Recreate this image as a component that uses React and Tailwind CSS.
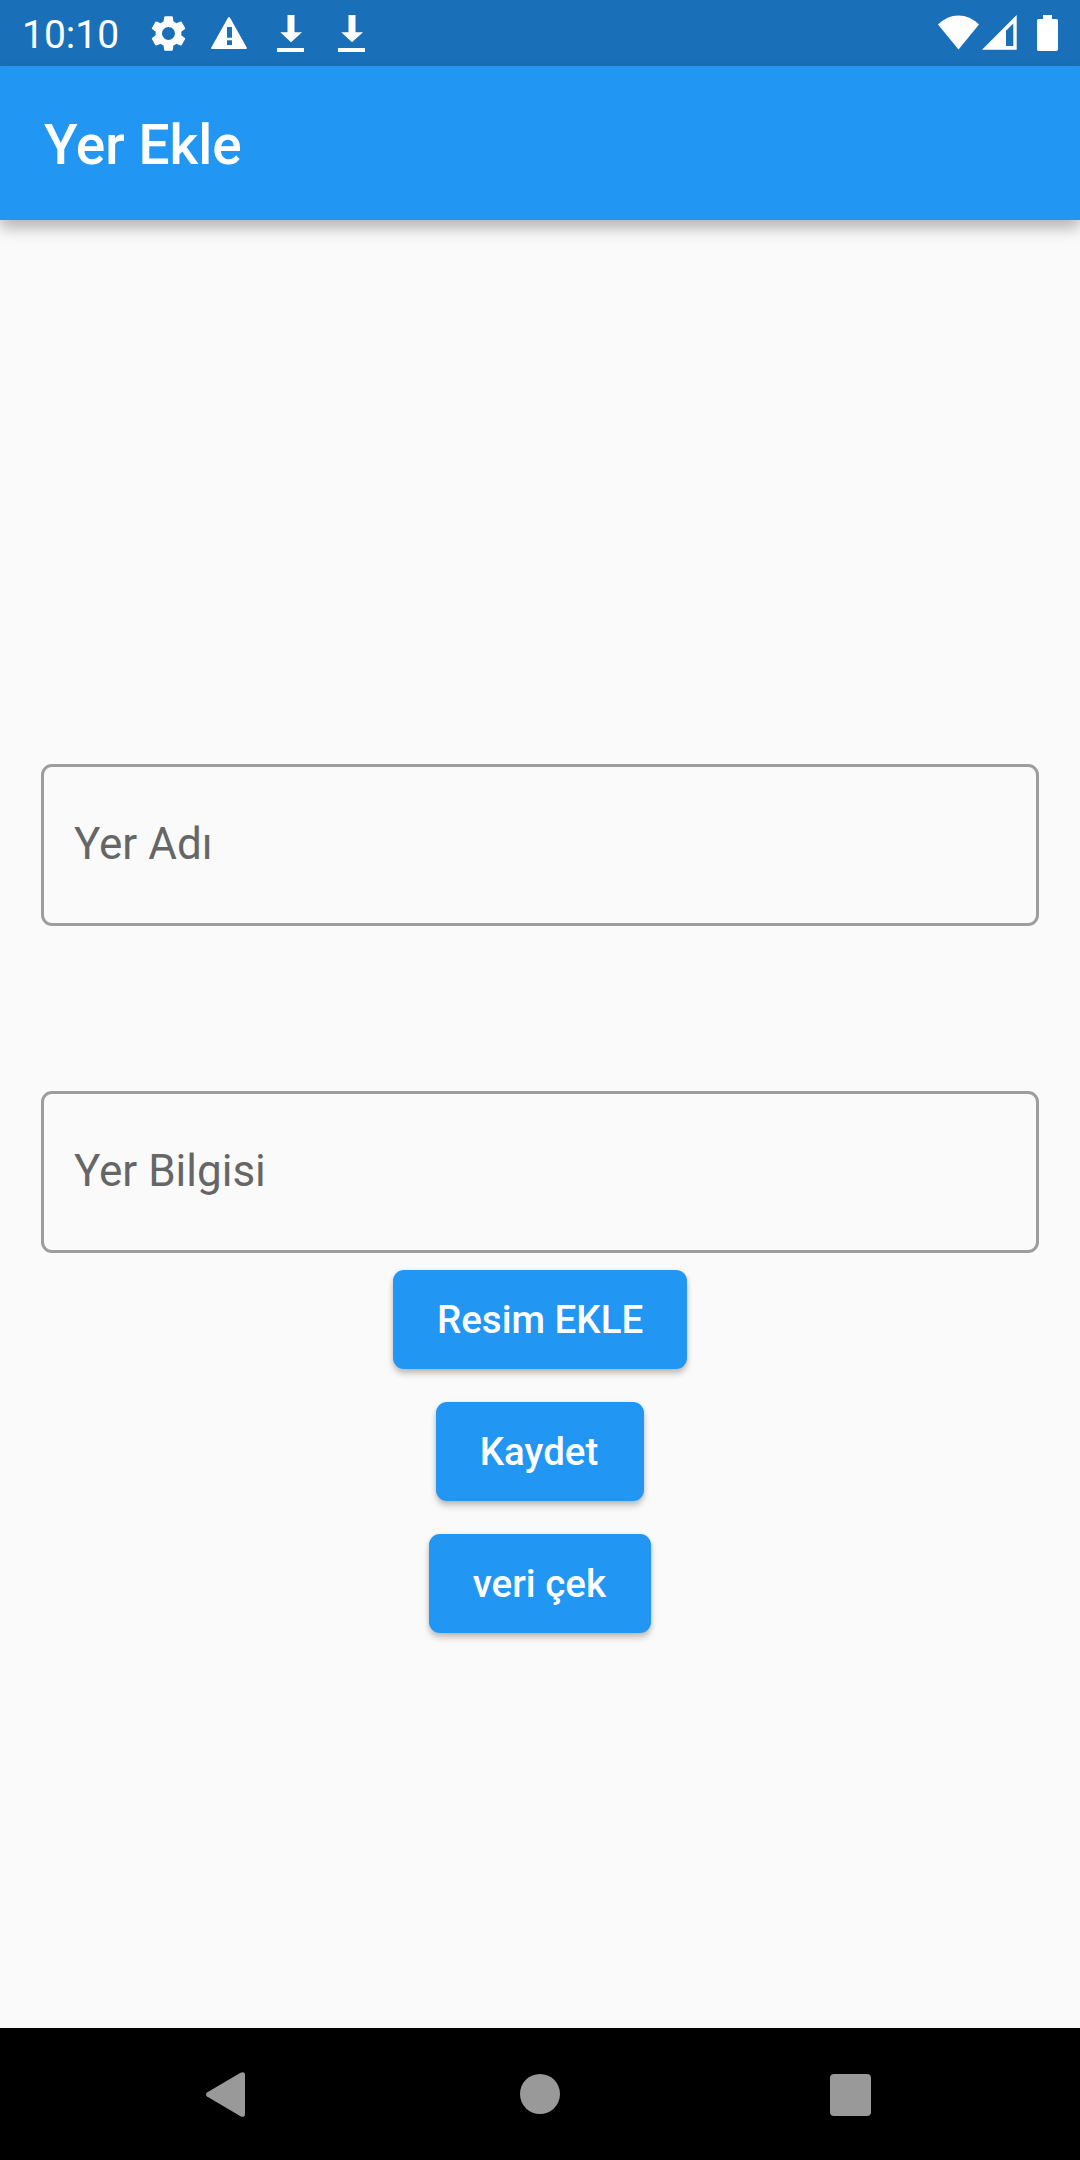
function GearIcon() {
  return (
    <svg className="h-[43px] w-[43px]" viewBox="0 0 24 24" fill="#fff">
      <path d="M19.14 12.94c.04-.3.06-.61.06-.94 0-.32-.02-.64-.07-.94l2.03-1.58c.18-.14.23-.41.12-.61l-1.92-3.32c-.12-.22-.37-.29-.59-.22l-2.39.96c-.5-.38-1.03-.7-1.62-.94l-.36-2.54c-.04-.24-.24-.41-.48-.41h-3.84c-.24 0-.43.17-.47.41l-.36 2.54c-.59.24-1.13.57-1.62.94l-2.39-.96c-.22-.08-.47 0-.59.22L2.74 8.87c-.12.21-.08.47.12.61l2.03 1.58c-.05.3-.09.63-.09.94s.02.64.07.94l-2.03 1.58c-.18.14-.23.41-.12.61l1.92 3.32c.12.22.37.29.59.22l2.39-.96c.5.38 1.03.7 1.62.94l.36 2.54c.05.24.24.41.48.41h3.84c.24 0 .44-.17.47-.41l.36-2.54c.59-.24 1.13-.56 1.62-.94l2.39.96c.22.08.47 0 .59-.22l1.92-3.32c.12-.22.07-.47-.12-.61l-2.01-1.58zM12 15.6c-1.98 0-3.6-1.62-3.6-3.6s1.62-3.6 3.6-3.6 3.6 1.62 3.6 3.6-1.62 3.6-3.6 3.6z" />
    </svg>
  );
}

function WarningIcon() {
  return (
    <svg className="h-[34px] w-[36px]" viewBox="0 0 36 34" fill="#fff">
      <path
        fillRule="evenodd"
        d="M1.2 33Q-.6 33 .3 31.4L16.8 2Q18 .2 19.2 2L35.7 31.4Q36.600 33 34.800 33ZM16 11V21.700H21V11ZM16 24.300V29H21V24.300Z"
      />
    </svg>
  );
}

function DownloadIcon() {
  return (
    <svg className="h-[37px] w-[27px]" viewBox="0 0 27 37" fill="#fff">
      <path d="M10.500 0H17.500V17.200H25L14 27.200L3.300 17.200H10.500ZM0 33H27V37H0Z" />
    </svg>
  );
}

function WifiIcon() {
  return (
    <svg className="h-[35px] w-[41px]" viewBox="0 0 41 35" fill="#fff">
      <path d="M20.500 34.500L0 9.500Q9 .4 20.500 .4T41 9.500Z" />
    </svg>
  );
}

function SignalIcon() {
  return (
    <svg className="h-[35px] w-[35px]" viewBox="0 0 35 35" fill="#fff">
      <path fillRule="evenodd" d="M34.700 0V34.700H0ZM31.300 8.500L24 15.800V31H31.300Z" />
    </svg>
  );
}

function BatteryIcon() {
  return (
    <svg className="h-[36px] w-[21px]" viewBox="0 0 21 36" fill="#fff">
      <path d="M6 0H15V4H19.500Q21 4 21 5.500V34Q21 36 19.500 36H1.500Q0 36 0 34V5.500Q0 4 1.500 4H6Z" />
    </svg>
  );
}

function StatusBar() {
  return (
    <div className="flex h-[66px] justify-between bg-[#1a70b8] pr-[22px] pl-[22px] text-white">
      <div className="flex items-start">
        <span className="w-[125px] pt-[12px] text-[39px] leading-[46px]">10:10</span>
        <div className="pt-[12px]"><GearIcon /></div>
        <div className="ml-[21px] pt-[16px]"><WarningIcon /></div>
        <div className="ml-[30px] pt-[15px]"><DownloadIcon /></div>
        <div className="ml-[34px] pt-[15px]"><DownloadIcon /></div>
      </div>
      <div className="flex items-start pt-[15px]">
        <WifiIcon />
        <div className="ml-[3px]"><SignalIcon /></div>
        <div className="ml-[20px]"><BatteryIcon /></div>
      </div>
    </div>
  );
}

function Field({ label }) {
  return (
    <div className="flex h-[162px] items-center rounded-[11px] border-[3px] border-[#9d9d9d] pb-[2px] pl-[30px] text-[44px] leading-[52px] text-[#666]">
      {label}
    </div>
  );
}

function Button({ width, children }) {
  return (
    <button
      className={`${width} h-[99px] rounded-[11px] bg-[#2196f3] pl-[44px] text-left text-[38.5px] font-medium whitespace-nowrap text-white shadow-[0_5px_6px_rgba(0,0,0,0.2),0_1px_5px_rgba(0,0,0,0.1)]`}
    >
      {children}
    </button>
  );
}

export default function App() {
  return (
    <div className="flex h-[2160px] w-[1080px] flex-col overflow-hidden bg-[#fafafa] font-[Roboto,sans-serif]">
      <StatusBar />
      <header className="flex h-[154px] items-center bg-[#2196f3] pl-[44px] shadow-[0_8px_14px_rgba(0,0,0,0.28)]">
        <h1 className="pt-[4px] text-[55px] leading-[64px] font-medium text-white">Yer Ekle</h1>
      </header>
      <main className="flex flex-1 flex-col px-[41px] pt-[544px]">
        <Field label="Yer Adı" />
        <div className="mt-[165px]">
          <Field label="Yer Bilgisi" />
        </div>
        <div className="mt-[17px] flex flex-col items-center gap-[33px]">
          <Button width="w-[294px]">Resim EKLE</Button>
          <Button width="w-[208.5px]">Kaydet</Button>
          <Button width="w-[222.5px]">veri çek</Button>
        </div>
      </main>
      <nav className="flex h-[132px] items-start bg-black pl-[206px]">
        <svg className="mt-[44px] h-[45px] w-[39px]" viewBox="0 0 39 45" fill="#999">
          <path d="M1 20.500L34.500 .7Q39 -1 39 3V42Q39 46 34.500 44.300L1 24.500Q-1 22.500 1 20.500Z" />
        </svg>
        <div className="mt-[46px] ml-[275px] h-[40px] w-[40px] rounded-full bg-[#999]" />
        <div className="mt-[46px] ml-[270px] h-[41.500px] w-[41px] rounded-[4px] bg-[#999]" />
      </nav>
    </div>
  );
}
